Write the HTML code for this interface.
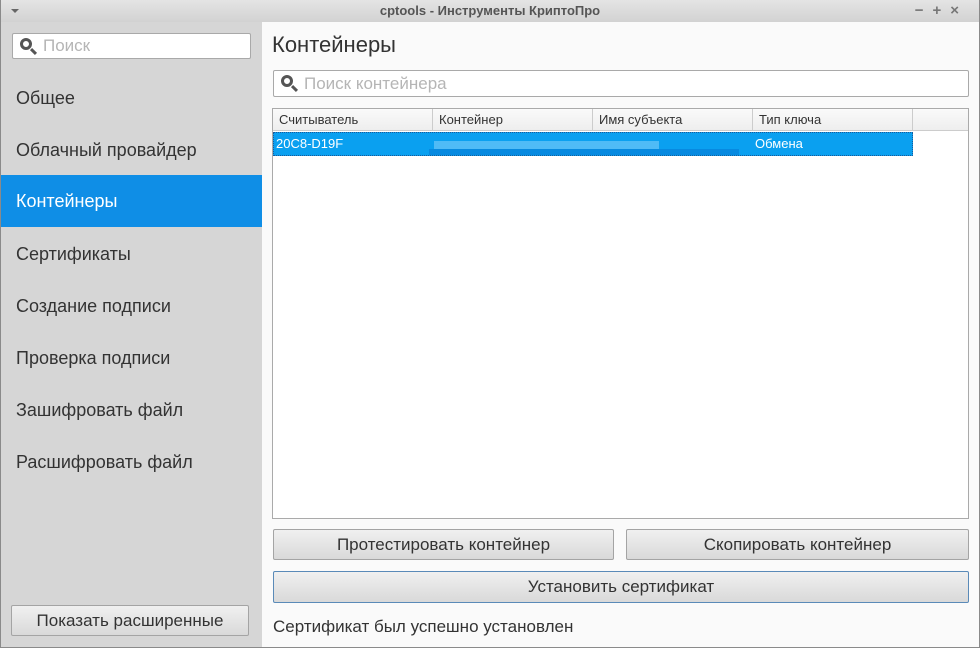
<!DOCTYPE html>
<html><head><meta charset="utf-8"><style>
*{box-sizing:border-box;margin:0;padding:0}
body{width:980px;height:648px;overflow:hidden;font-family:"Liberation Sans","DejaVu Sans",sans-serif;background:#fafafa;position:relative;color:#333}
.win{position:absolute;left:0;top:0;width:980px;height:648px;border:1px solid #8a8a8a;border-top:none}
.title{position:absolute;left:0;top:0;width:980px;height:22px;background:linear-gradient(#e4e4e4,#d2d2d2);text-align:center;font-size:13px;font-weight:bold;color:#555;line-height:22px}
.side{position:absolute;left:1px;top:22px;width:261px;height:625px;background:#d6d6d6}
.main{position:absolute;left:262px;top:22px;width:717px;height:625px;background:#fafafa}
.inp{position:absolute;background:#fff;border:1px solid #a9a9a9;border-radius:2px;color:#b5b5b5;font-size:17px}
.item{position:absolute;left:0;width:261px;height:52px;line-height:52px;padding-left:15px;font-size:18px;color:#333}
.sel{background:#0f8ee6;color:#fff}
.btn{position:absolute;background:linear-gradient(#f0f0f0,#d9d9d9);border:1px solid #a4a4a4;border-radius:2px;text-align:center;font-size:17px;color:#333}
.lens{position:absolute;width:12px;height:12px;border:3px solid #555;border-radius:50%}
.lens:after{content:"";position:absolute;left:7px;top:9px;width:7px;height:3px;background:#555;transform:rotate(45deg)}
</style></head><body>
<div class="title">cptools - Инструменты КриптоПро
<span style="position:absolute;left:11px;top:9px;border:4px solid transparent;border-top:4px solid #666;width:0;height:0"></span>
<span style="position:absolute;right:12px;top:0;font-size:15px;color:#777;letter-spacing:9px">−+×</span></div>
<div class="win"></div>
<div class="side">
 <div class="inp" style="left:11px;top:11px;width:239px;height:26px;line-height:24px;padding-left:30px">Поиск<div class="lens" style="left:7px;top:4px"></div></div>
 <div class="item" style="top:50px">Общее</div>
 <div class="item" style="top:102px">Облачный провайдер</div>
 <div class="item sel" style="top:153px">Контейнеры</div>
 <div class="item" style="top:206px">Сертификаты</div>
 <div class="item" style="top:258px">Создание подписи</div>
 <div class="item" style="top:310px">Проверка подписи</div>
 <div class="item" style="top:362px">Зашифровать файл</div>
 <div class="item" style="top:414px">Расшифровать файл</div>
 <div class="btn" style="left:10px;top:583px;width:238px;height:31px;line-height:29px">Показать расширенные</div>
</div>
<div class="main">
 <div style="position:absolute;left:10px;top:10px;font-size:22px;color:#333">Контейнеры</div>
 <div class="inp" style="left:11px;top:48px;width:696px;height:27px;line-height:25px;padding-left:30px">Поиск контейнера<div class="lens" style="left:7px;top:4px"></div></div>
 <div style="position:absolute;left:10px;top:86px;width:697px;height:411px;background:#fff;border:1px solid #aaa">
  <div style="position:absolute;left:0;top:0;width:695px;height:22px;background:linear-gradient(#fafafa,#eee);border-bottom:1px solid #ccc;font-size:13px;color:#333;line-height:22px">
   <span style="position:absolute;left:6px">Считыватель</span>
   <span style="position:absolute;left:159px;top:0;height:22px;border-left:1px solid #ccc;padding-left:6px">Контейнер</span>
   <span style="position:absolute;left:319px;top:0;height:22px;border-left:1px solid #ccc;padding-left:6px">Имя субъекта</span>
   <span style="position:absolute;left:479px;top:0;height:22px;border-left:1px solid #ccc;padding-left:6px">Тип ключа</span>
   <span style="position:absolute;left:639px;top:0;height:22px;border-left:1px solid #ccc"></span>
  </div>
  <div style="position:absolute;left:0;top:23px;width:640px;height:24px;background:#0aa0f0;border:1px dotted #1a5a9a;color:#fff;font-size:13px;line-height:22px">
   <span style="position:absolute;left:2px">20C8-D19F</span>
   <span style="position:absolute;left:160px;top:8px;width:225px;height:8px;background:#6cc6f8;opacity:.7"></span>
   <span style="position:absolute;left:155px;top:16px;width:310px;height:6px;background:#078ae0"></span>
   <span style="position:absolute;left:481px">Обмена</span>
  </div>
 </div>
 <div class="btn" style="left:11px;top:507px;width:341px;height:31px;line-height:29px">Протестировать контейнер</div>
 <div class="btn" style="left:364px;top:507px;width:343px;height:31px;line-height:29px">Скопировать контейнер</div>
 <div class="btn" style="left:11px;top:549px;width:696px;height:32px;line-height:30px;border-color:#5a8ab8">Установить сертификат</div>
 <div style="position:absolute;left:11px;top:595px;font-size:17px;color:#333">Сертификат был успешно установлен</div>
</div>
</body></html>
